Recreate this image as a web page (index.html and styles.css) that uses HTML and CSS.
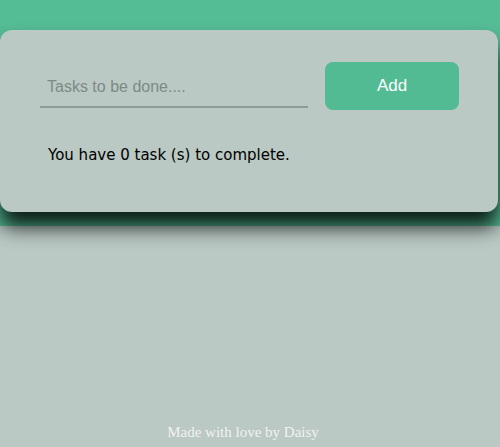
FILE: index.html
```html
<!DOCTYPE html>
<html>
<head>
<meta charset="utf-8">
<link rel="stylesheet" href="styles.css">
</head>
<body>
<div class="page">
  <header class="band">
    <div class="card">
      <div class="row">
        <input class="task-input" type="text" placeholder="Tasks to be done....">
        <button class="add-btn">Add</button>
      </div>
      <p class="count">You have 0 task (s) to complete.</p>
    </div>
  </header>
  <main class="spacer"></main>
  <footer class="footer">Made with love by Daisy</footer>
</div>
</body>
</html>
```

FILE: styles.css
```css
html, body {
  margin: 0;
  padding: 0;
  height: 100%;
}
body {
  background: #bac9c3;
  overflow: hidden;
}
.page {
  display: flex;
  flex-direction: column;
  height: 447px;
}
.band {
  background: #55bd96;
  height: 226px;
  box-sizing: border-box;
  padding-top: 30px;
  flex-shrink: 0;
}
.card {
  width: 498px;
  height: 182px;
  box-sizing: border-box;
  background: #bac9c3;
  border-radius: 12px;
  box-shadow: 0 15px 20px rgba(0, 0, 0, 0.85);
  padding: 32px 0 0 40px;
  position: relative;
}
.row {
  display: flex;
  align-items: flex-start;
  gap: 17px;
}
.task-input {
  width: 268px;
  height: 46px;
  box-sizing: border-box;
  border: none;
  border-bottom: 2px solid #8f9c97;
  background: transparent;
  font-family: "Liberation Sans", Arial, sans-serif;
  font-size: 16px;
  color: #333;
  padding: 6px 0 0 7px;
  outline: none;
}
.task-input::placeholder {
  color: #7f8985;
}
.add-btn {
  width: 134px;
  height: 48px;
  border: none;
  border-radius: 8px;
  background: #52bb94;
  color: #ffffff;
  font-family: "Liberation Sans", Arial, sans-serif;
  font-size: 17px;
}
.count {
  margin: 36px 0 0 8px;
  font-family: "Comic Sans MS", "DejaVu Sans", sans-serif;
  font-size: 15px;
  color: #000;
}
.spacer {
  flex: 1;
}
.footer {
  text-align: center;
  font-family: "Liberation Serif", "Times New Roman", serif;
  font-size: 15px;
  color: #f2f2f2;
  padding-bottom: 6px;
  margin-left: -14px;
}
```
